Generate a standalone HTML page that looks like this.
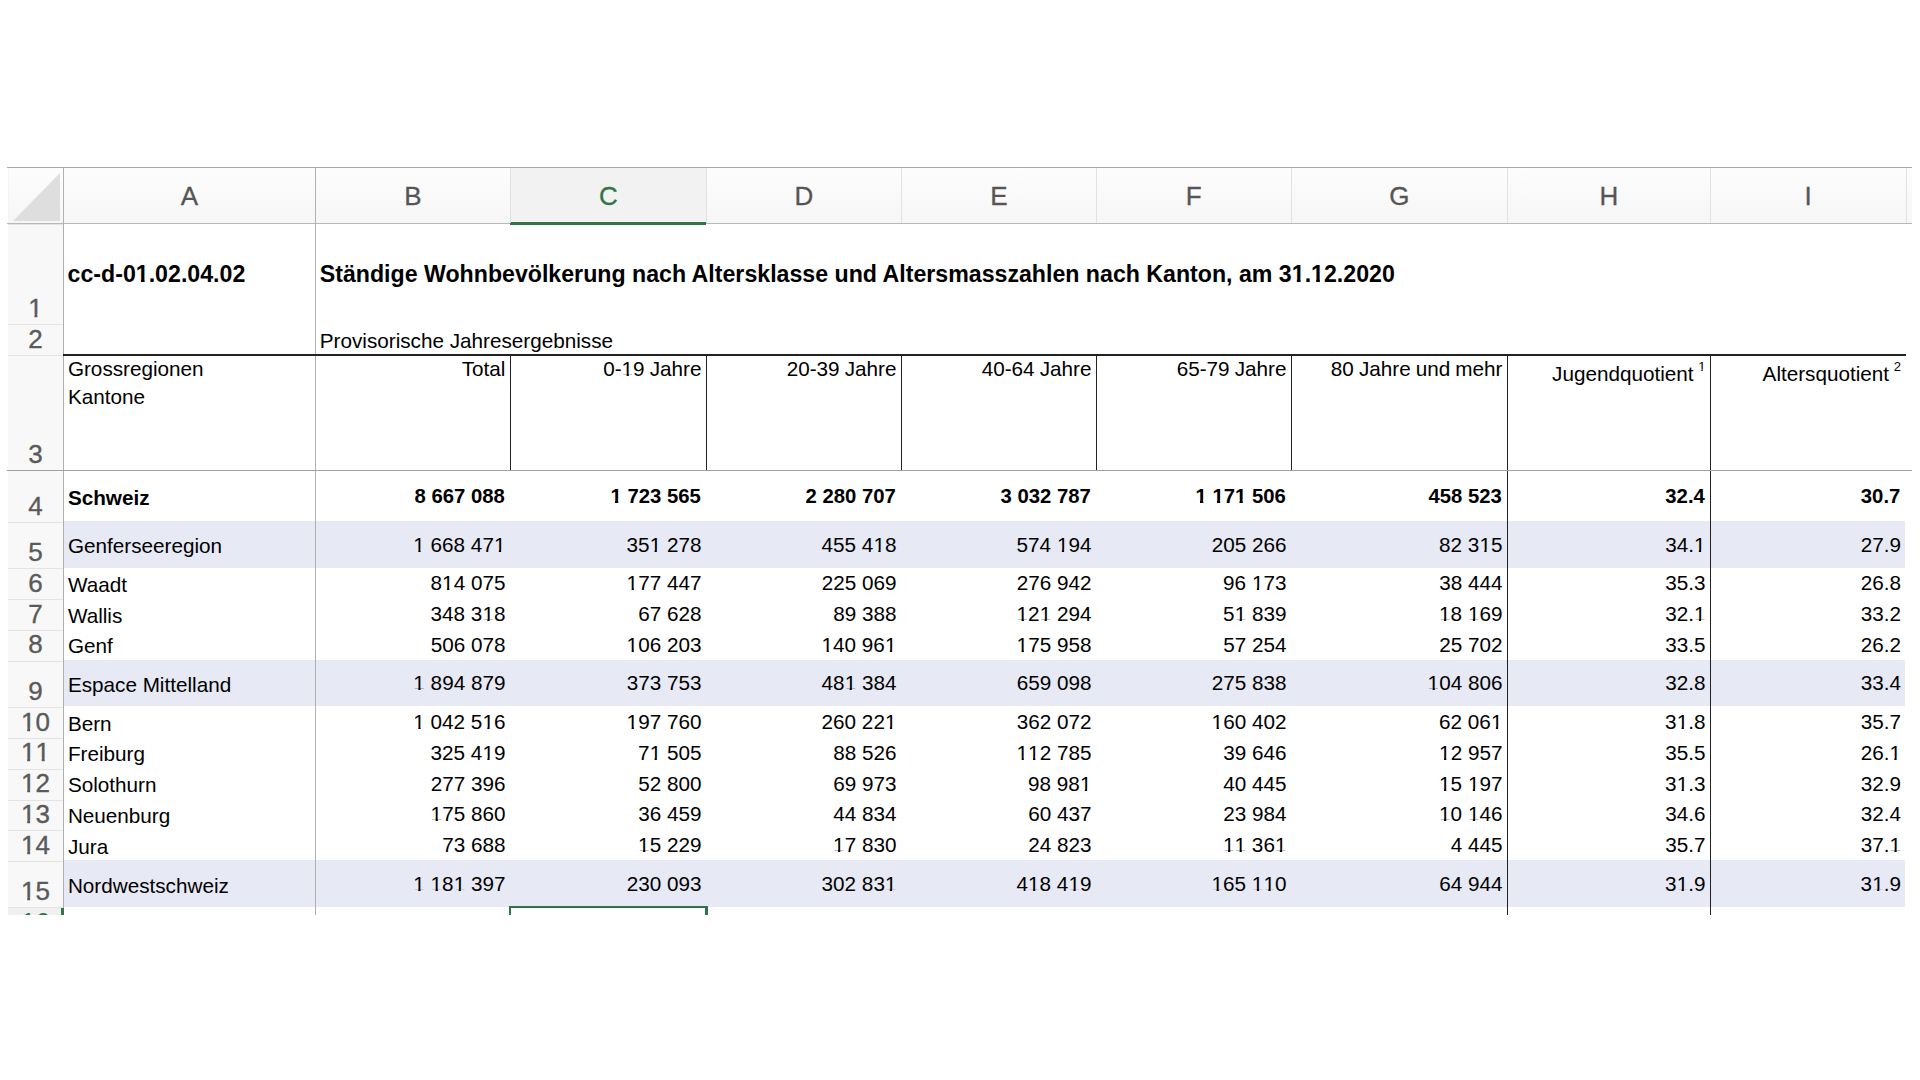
<!DOCTYPE html>
<html><head><meta charset="utf-8"><style>
html,body{margin:0;padding:0;background:#fff;width:1920px;height:1080px;overflow:hidden;position:relative}
.t{position:absolute;font-family:"Liberation Sans",sans-serif;line-height:1;white-space:nowrap}
.c{text-align:center}
.r{position:absolute}
.o{display:inline-block;clip-path:polygon(0 0,100% 0,100% 0.73em,0.35em 0.73em,0.35em 100%,0.24em 100%,0.24em 0.73em,0 0.73em)}
[style*="font-weight:700"] .o{clip-path:polygon(0 0,100% 0,100% 0.7em,0.38em 0.7em,0.38em 100%,0.22em 100%,0.22em 0.7em,0 0.7em)}
.sup{font-size:13px;position:relative;top:-10px;padding-left:4.6px}
</style></head><body>
<div class="r" style="left:8px;top:167px;width:1904px;height:57px;background:linear-gradient(#fdfdfd,#f6f6f6);"></div>
<div class="r" style="left:510px;top:168px;width:196px;height:55px;background:#f2f2f2;"></div>
<div class="r" style="left:8px;top:224px;width:55px;height:683.3px;background:#f8f8f8;"></div>
<div class="r" style="left:8px;top:907.3px;width:55px;height:7.7000000000000455px;background:#f0f0f0;"></div>
<svg class="r" style="left:13px;top:173px" width="48" height="49"><polygon points="47,0 47,48 0,48" fill="#dedede"/></svg>
<div class="r" style="left:63px;top:521px;width:1842px;height:46.59999999999991px;background:#e7e9f4;"></div>
<div class="r" style="left:63px;top:659.6px;width:1842px;height:46.89999999999998px;background:#e7e9f4;"></div>
<div class="r" style="left:63px;top:860.2px;width:1842px;height:46.399999999999864px;background:#e7e9f4;"></div>
<div class="r" style="left:7px;top:167px;width:1905px;height:1px;background:#a8a8a8;"></div>
<div class="r" style="left:7px;top:223px;width:1905px;height:1px;background:#b8b8b8;"></div>
<div class="r" style="left:510px;top:222px;width:196px;height:3px;background:#2f7545;"></div>
<div class="r" style="left:510px;top:168px;width:1px;height:55px;background:#e2e2e2;"></div>
<div class="r" style="left:706px;top:168px;width:1px;height:55px;background:#e2e2e2;"></div>
<div class="r" style="left:901px;top:168px;width:1px;height:55px;background:#e2e2e2;"></div>
<div class="r" style="left:1096px;top:168px;width:1px;height:55px;background:#e2e2e2;"></div>
<div class="r" style="left:1291px;top:168px;width:1px;height:55px;background:#e2e2e2;"></div>
<div class="r" style="left:1507px;top:168px;width:1px;height:55px;background:#e2e2e2;"></div>
<div class="r" style="left:1710px;top:168px;width:1px;height:55px;background:#e2e2e2;"></div>
<div class="r" style="left:1905.5px;top:168px;width:1.0px;height:55px;background:#e2e2e2;"></div>
<div class="r" style="left:8px;top:168px;width:1px;height:55px;background:#f4f4f4;"></div>
<div class="r" style="left:8px;top:224px;width:55px;height:1px;background:#e6e4e1;"></div>
<div class="r" style="left:8px;top:324.3px;width:55px;height:1.0px;background:#e6e4e1;"></div>
<div class="r" style="left:8px;top:355px;width:55px;height:1px;background:#e6e4e1;"></div>
<div class="r" style="left:8px;top:470.4px;width:55px;height:1.0px;background:#e6e4e1;"></div>
<div class="r" style="left:8px;top:522px;width:55px;height:1px;background:#e6e4e1;"></div>
<div class="r" style="left:8px;top:568.3px;width:55px;height:1.0px;background:#e6e4e1;"></div>
<div class="r" style="left:8px;top:599.1px;width:55px;height:1.0px;background:#e6e4e1;"></div>
<div class="r" style="left:8px;top:629.8px;width:55px;height:1.0px;background:#e6e4e1;"></div>
<div class="r" style="left:8px;top:660.6px;width:55px;height:1.0px;background:#e6e4e1;"></div>
<div class="r" style="left:8px;top:707.2px;width:55px;height:1.0px;background:#e6e4e1;"></div>
<div class="r" style="left:8px;top:737.8px;width:55px;height:1.0px;background:#e6e4e1;"></div>
<div class="r" style="left:8px;top:768.5px;width:55px;height:1.0px;background:#e6e4e1;"></div>
<div class="r" style="left:8px;top:799.5px;width:55px;height:1.0px;background:#e6e4e1;"></div>
<div class="r" style="left:8px;top:830.3px;width:55px;height:1.0px;background:#e6e4e1;"></div>
<div class="r" style="left:8px;top:861.2px;width:55px;height:1.0px;background:#e6e4e1;"></div>
<div class="r" style="left:8px;top:907.3px;width:55px;height:1.0px;background:#e6e4e1;"></div>
<div class="r" style="left:62.5px;top:167px;width:1.5px;height:748px;background:#b0b0b0;"></div>
<div class="r" style="left:314.5px;top:167px;width:1.5px;height:748px;background:#b0b0b0;"></div>
<div class="r" style="left:63px;top:354.2px;width:1843px;height:1.5px;background:#222;"></div>
<div class="r" style="left:509.5px;top:355px;width:1.5px;height:115.39999999999998px;background:#222;"></div>
<div class="r" style="left:705.5px;top:355px;width:1.5px;height:115.39999999999998px;background:#222;"></div>
<div class="r" style="left:900.5px;top:355px;width:1.5px;height:115.39999999999998px;background:#222;"></div>
<div class="r" style="left:1095.5px;top:355px;width:1.5px;height:115.39999999999998px;background:#222;"></div>
<div class="r" style="left:1290.5px;top:355px;width:1.5px;height:115.39999999999998px;background:#222;"></div>
<div class="r" style="left:1506.5px;top:355px;width:1.5px;height:115.39999999999998px;background:#222;"></div>
<div class="r" style="left:1709.5px;top:355px;width:1.5px;height:115.39999999999998px;background:#222;"></div>
<div class="r" style="left:1506.5px;top:470px;width:1.5px;height:445px;background:#222;"></div>
<div class="r" style="left:1709.5px;top:470px;width:1.5px;height:445px;background:#222;"></div>
<div class="r" style="left:7px;top:469.8px;width:1905px;height:1.1999999999999886px;background:#a0a0a0;"></div>
<div class="r" style="left:508.5px;top:905.5px;width:199.0px;height:2.5px;background:#2f7545;"></div>
<div class="r" style="left:508.5px;top:905.5px;width:2.5px;height:9.5px;background:#2f7545;"></div>
<div class="r" style="left:705px;top:905.5px;width:2.5px;height:9.5px;background:#2f7545;"></div>
<div class="r" style="left:61px;top:907.5px;width:3px;height:7.5px;background:#2f7545;"></div>
<div class="t c" style="left:-10.699999999999989px;width:400px;top:182.79px;font-size:26px;font-weight:400;color:#555;-webkit-text-stroke:0.3px #555">A</div>
<div class="t c" style="left:212.8px;width:400px;top:182.79px;font-size:26px;font-weight:400;color:#555;-webkit-text-stroke:0.3px #555">B</div>
<div class="t c" style="left:408.29999999999995px;width:400px;top:182.79px;font-size:26px;font-weight:400;color:#2f7545;-webkit-text-stroke:0.3px #2f7545">C</div>
<div class="t c" style="left:603.8px;width:400px;top:182.79px;font-size:26px;font-weight:400;color:#555;-webkit-text-stroke:0.3px #555">D</div>
<div class="t c" style="left:798.8px;width:400px;top:182.79px;font-size:26px;font-weight:400;color:#555;-webkit-text-stroke:0.3px #555">E</div>
<div class="t c" style="left:993.8px;width:400px;top:182.79px;font-size:26px;font-weight:400;color:#555;-webkit-text-stroke:0.3px #555">F</div>
<div class="t c" style="left:1199.3px;width:400px;top:182.79px;font-size:26px;font-weight:400;color:#555;-webkit-text-stroke:0.3px #555">G</div>
<div class="t c" style="left:1408.8px;width:400px;top:182.79px;font-size:26px;font-weight:400;color:#555;-webkit-text-stroke:0.3px #555">H</div>
<div class="t c" style="left:1608.05px;width:400px;top:182.79px;font-size:26px;font-weight:400;color:#555;-webkit-text-stroke:0.3px #555">I</div>
<div class="t c" style="left:-164.5px;width:400px;top:295.09px;font-size:26px;font-weight:400;color:#5a5a5a;-webkit-text-stroke:0.35px #5a5a5a"><span class="o">1</span></div>
<div class="t c" style="left:-164.5px;width:400px;top:325.79px;font-size:26px;font-weight:400;color:#5a5a5a;-webkit-text-stroke:0.35px #5a5a5a">2</div>
<div class="t c" style="left:-164.5px;width:400px;top:441.19px;font-size:26px;font-weight:400;color:#5a5a5a;-webkit-text-stroke:0.35px #5a5a5a">3</div>
<div class="t c" style="left:-164.5px;width:400px;top:492.79px;font-size:26px;font-weight:400;color:#5a5a5a;-webkit-text-stroke:0.35px #5a5a5a">4</div>
<div class="t c" style="left:-164.5px;width:400px;top:539.09px;font-size:26px;font-weight:400;color:#5a5a5a;-webkit-text-stroke:0.35px #5a5a5a">5</div>
<div class="t c" style="left:-164.5px;width:400px;top:569.89px;font-size:26px;font-weight:400;color:#5a5a5a;-webkit-text-stroke:0.35px #5a5a5a">6</div>
<div class="t c" style="left:-164.5px;width:400px;top:600.59px;font-size:26px;font-weight:400;color:#5a5a5a;-webkit-text-stroke:0.35px #5a5a5a">7</div>
<div class="t c" style="left:-164.5px;width:400px;top:631.39px;font-size:26px;font-weight:400;color:#5a5a5a;-webkit-text-stroke:0.35px #5a5a5a">8</div>
<div class="t c" style="left:-164.5px;width:400px;top:677.99px;font-size:26px;font-weight:400;color:#5a5a5a;-webkit-text-stroke:0.35px #5a5a5a">9</div>
<div class="t c" style="left:-164.5px;width:400px;top:708.59px;font-size:26px;font-weight:400;color:#5a5a5a;-webkit-text-stroke:0.35px #5a5a5a"><span class="o">1</span>0</div>
<div class="t c" style="left:-164.5px;width:400px;top:739.29px;font-size:26px;font-weight:400;color:#5a5a5a;-webkit-text-stroke:0.35px #5a5a5a"><span class="o">1</span><span class="o">1</span></div>
<div class="t c" style="left:-164.5px;width:400px;top:770.29px;font-size:26px;font-weight:400;color:#5a5a5a;-webkit-text-stroke:0.35px #5a5a5a"><span class="o">1</span>2</div>
<div class="t c" style="left:-164.5px;width:400px;top:801.09px;font-size:26px;font-weight:400;color:#5a5a5a;-webkit-text-stroke:0.35px #5a5a5a"><span class="o">1</span>3</div>
<div class="t c" style="left:-164.5px;width:400px;top:831.99px;font-size:26px;font-weight:400;color:#5a5a5a;-webkit-text-stroke:0.35px #5a5a5a"><span class="o">1</span>4</div>
<div class="t c" style="left:-164.5px;width:400px;top:878.09px;font-size:26px;font-weight:400;color:#5a5a5a;-webkit-text-stroke:0.35px #5a5a5a"><span class="o">1</span>5</div>
<div class="r" style="left:8px;top:907.5px;width:53px;height:7.5px;overflow:hidden"><div class="t c" style="left:-172.5px;width:400px;top:1.39px;font-size:26px;color:#2f7545">16</div></div>
<div class="r" style="left:0px;top:915px;width:1920px;height:165px;background:#fff;"></div>
<div class="t" style="left:67.6px;top:262.69px;font-size:23.17px;font-weight:700;color:#000;">cc-d-0<span class="o">1</span>.02.04.02</div>
<div class="t" style="left:319.8px;top:262.69px;font-size:23.17px;font-weight:700;color:#000;">Ständige Wohnbevölkerung nach Altersklasse und Altersmasszahlen nach Kanton, am 3<span class="o">1</span>.<span class="o">1</span>2.2020</div>
<div class="t" style="left:319.8px;top:330.98px;font-size:20.7px;font-weight:400;color:#000;">Provisorische Jahresergebnisse</div>
<div class="t" style="left:67.89999999999999px;top:358.88px;font-size:20.7px;font-weight:400;color:#000;">Grossregionen</div>
<div class="t" style="left:67.89999999999999px;top:387.48px;font-size:20.7px;font-weight:400;color:#000;">Kantone</div>
<div class="t" style="right:1414.6px;top:359.28px;font-size:20.7px;font-weight:400;color:#000;word-spacing:-0.7px">Total</div>
<div class="t" style="right:1218.6px;top:359.28px;font-size:20.7px;font-weight:400;color:#000;word-spacing:-0.7px">0-<span class="o">1</span>9 Jahre</div>
<div class="t" style="right:1023.6px;top:359.28px;font-size:20.7px;font-weight:400;color:#000;word-spacing:-0.7px">20-39 Jahre</div>
<div class="t" style="right:828.5999999999999px;top:359.28px;font-size:20.7px;font-weight:400;color:#000;word-spacing:-0.7px">40-64 Jahre</div>
<div class="t" style="right:633.5999999999999px;top:359.28px;font-size:20.7px;font-weight:400;color:#000;word-spacing:-0.7px">65-79 Jahre</div>
<div class="t" style="right:417.5999999999999px;top:359.28px;font-size:20.7px;font-weight:400;color:#000;word-spacing:-0.7px">80 Jahre und mehr</div>
<div class="t" style="right:214.5999999999999px;top:363.88px;font-size:20.7px;font-weight:400;color:#000;">Jugendquotient<span class="sup"><span class="o">1</span></span></div>
<div class="t" style="right:19.09999999999991px;top:363.88px;font-size:20.7px;font-weight:400;color:#000;">Altersquotient<span class="sup">2</span></div>
<div class="t" style="left:67.89999999999999px;top:487.98px;font-size:20.7px;font-weight:700;color:#000;">Schweiz</div>
<div class="t" style="right:1415.2px;top:485.52px;font-size:20.3px;font-weight:700;color:#000;">8 667 088</div>
<div class="t" style="right:1219.2px;top:485.52px;font-size:20.3px;font-weight:700;color:#000;"><span class="o">1</span> 723 565</div>
<div class="t" style="right:1024.2px;top:485.52px;font-size:20.3px;font-weight:700;color:#000;">2 280 707</div>
<div class="t" style="right:829.1999999999998px;top:485.52px;font-size:20.3px;font-weight:700;color:#000;">3 032 787</div>
<div class="t" style="right:634.1999999999998px;top:485.52px;font-size:20.3px;font-weight:700;color:#000;"><span class="o">1</span> <span class="o">1</span>7<span class="o">1</span> 506</div>
<div class="t" style="right:418.1999999999998px;top:485.52px;font-size:20.3px;font-weight:700;color:#000;">458 523</div>
<div class="t" style="right:215.19999999999982px;top:485.52px;font-size:20.3px;font-weight:700;color:#000;">32.4</div>
<div class="t" style="right:19.699999999999818px;top:485.52px;font-size:20.3px;font-weight:700;color:#000;">30.7</div>
<div class="t" style="left:67.89999999999999px;top:536.48px;font-size:20.7px;font-weight:400;color:#000;">Genferseeregion</div>
<div class="t" style="right:1414.6px;top:534.58px;font-size:20.7px;font-weight:400;color:#000;"><span class="o">1</span> 668 47<span class="o">1</span></div>
<div class="t" style="right:1218.6px;top:534.58px;font-size:20.7px;font-weight:400;color:#000;">35<span class="o">1</span> 278</div>
<div class="t" style="right:1023.6px;top:534.58px;font-size:20.7px;font-weight:400;color:#000;">455 4<span class="o">1</span>8</div>
<div class="t" style="right:828.5999999999999px;top:534.58px;font-size:20.7px;font-weight:400;color:#000;">574 <span class="o">1</span>94</div>
<div class="t" style="right:633.5999999999999px;top:534.58px;font-size:20.7px;font-weight:400;color:#000;">205 266</div>
<div class="t" style="right:417.5999999999999px;top:534.58px;font-size:20.7px;font-weight:400;color:#000;">82 3<span class="o">1</span>5</div>
<div class="t" style="right:214.5999999999999px;top:534.58px;font-size:20.7px;font-weight:400;color:#000;">34.<span class="o">1</span></div>
<div class="t" style="right:19.09999999999991px;top:534.58px;font-size:20.7px;font-weight:400;color:#000;">27.9</div>
<div class="t" style="left:67.89999999999999px;top:574.88px;font-size:20.7px;font-weight:400;color:#000;">Waadt</div>
<div class="t" style="right:1414.6px;top:572.98px;font-size:20.7px;font-weight:400;color:#000;">8<span class="o">1</span>4 075</div>
<div class="t" style="right:1218.6px;top:572.98px;font-size:20.7px;font-weight:400;color:#000;"><span class="o">1</span>77 447</div>
<div class="t" style="right:1023.6px;top:572.98px;font-size:20.7px;font-weight:400;color:#000;">225 069</div>
<div class="t" style="right:828.5999999999999px;top:572.98px;font-size:20.7px;font-weight:400;color:#000;">276 942</div>
<div class="t" style="right:633.5999999999999px;top:572.98px;font-size:20.7px;font-weight:400;color:#000;">96 <span class="o">1</span>73</div>
<div class="t" style="right:417.5999999999999px;top:572.98px;font-size:20.7px;font-weight:400;color:#000;">38 444</div>
<div class="t" style="right:214.5999999999999px;top:572.98px;font-size:20.7px;font-weight:400;color:#000;">35.3</div>
<div class="t" style="right:19.09999999999991px;top:572.98px;font-size:20.7px;font-weight:400;color:#000;">26.8</div>
<div class="t" style="left:67.89999999999999px;top:606.18px;font-size:20.7px;font-weight:400;color:#000;">Wallis</div>
<div class="t" style="right:1414.6px;top:604.28px;font-size:20.7px;font-weight:400;color:#000;">348 3<span class="o">1</span>8</div>
<div class="t" style="right:1218.6px;top:604.28px;font-size:20.7px;font-weight:400;color:#000;">67 628</div>
<div class="t" style="right:1023.6px;top:604.28px;font-size:20.7px;font-weight:400;color:#000;">89 388</div>
<div class="t" style="right:828.5999999999999px;top:604.28px;font-size:20.7px;font-weight:400;color:#000;"><span class="o">1</span>2<span class="o">1</span> 294</div>
<div class="t" style="right:633.5999999999999px;top:604.28px;font-size:20.7px;font-weight:400;color:#000;">5<span class="o">1</span> 839</div>
<div class="t" style="right:417.5999999999999px;top:604.28px;font-size:20.7px;font-weight:400;color:#000;"><span class="o">1</span>8 <span class="o">1</span>69</div>
<div class="t" style="right:214.5999999999999px;top:604.28px;font-size:20.7px;font-weight:400;color:#000;">32.<span class="o">1</span></div>
<div class="t" style="right:19.09999999999991px;top:604.28px;font-size:20.7px;font-weight:400;color:#000;">33.2</div>
<div class="t" style="left:67.89999999999999px;top:636.48px;font-size:20.7px;font-weight:400;color:#000;">Genf</div>
<div class="t" style="right:1414.6px;top:634.58px;font-size:20.7px;font-weight:400;color:#000;">506 078</div>
<div class="t" style="right:1218.6px;top:634.58px;font-size:20.7px;font-weight:400;color:#000;"><span class="o">1</span>06 203</div>
<div class="t" style="right:1023.6px;top:634.58px;font-size:20.7px;font-weight:400;color:#000;"><span class="o">1</span>40 96<span class="o">1</span></div>
<div class="t" style="right:828.5999999999999px;top:634.58px;font-size:20.7px;font-weight:400;color:#000;"><span class="o">1</span>75 958</div>
<div class="t" style="right:633.5999999999999px;top:634.58px;font-size:20.7px;font-weight:400;color:#000;">57 254</div>
<div class="t" style="right:417.5999999999999px;top:634.58px;font-size:20.7px;font-weight:400;color:#000;">25 702</div>
<div class="t" style="right:214.5999999999999px;top:634.58px;font-size:20.7px;font-weight:400;color:#000;">33.5</div>
<div class="t" style="right:19.09999999999991px;top:634.58px;font-size:20.7px;font-weight:400;color:#000;">26.2</div>
<div class="t" style="left:67.89999999999999px;top:675.18px;font-size:20.7px;font-weight:400;color:#000;">Espace Mittelland</div>
<div class="t" style="right:1414.6px;top:673.28px;font-size:20.7px;font-weight:400;color:#000;"><span class="o">1</span> 894 879</div>
<div class="t" style="right:1218.6px;top:673.28px;font-size:20.7px;font-weight:400;color:#000;">373 753</div>
<div class="t" style="right:1023.6px;top:673.28px;font-size:20.7px;font-weight:400;color:#000;">48<span class="o">1</span> 384</div>
<div class="t" style="right:828.5999999999999px;top:673.28px;font-size:20.7px;font-weight:400;color:#000;">659 098</div>
<div class="t" style="right:633.5999999999999px;top:673.28px;font-size:20.7px;font-weight:400;color:#000;">275 838</div>
<div class="t" style="right:417.5999999999999px;top:673.28px;font-size:20.7px;font-weight:400;color:#000;"><span class="o">1</span>04 806</div>
<div class="t" style="right:214.5999999999999px;top:673.28px;font-size:20.7px;font-weight:400;color:#000;">32.8</div>
<div class="t" style="right:19.09999999999991px;top:673.28px;font-size:20.7px;font-weight:400;color:#000;">33.4</div>
<div class="t" style="left:67.89999999999999px;top:713.78px;font-size:20.7px;font-weight:400;color:#000;">Bern</div>
<div class="t" style="right:1414.6px;top:711.88px;font-size:20.7px;font-weight:400;color:#000;"><span class="o">1</span> 042 5<span class="o">1</span>6</div>
<div class="t" style="right:1218.6px;top:711.88px;font-size:20.7px;font-weight:400;color:#000;"><span class="o">1</span>97 760</div>
<div class="t" style="right:1023.6px;top:711.88px;font-size:20.7px;font-weight:400;color:#000;">260 22<span class="o">1</span></div>
<div class="t" style="right:828.5999999999999px;top:711.88px;font-size:20.7px;font-weight:400;color:#000;">362 072</div>
<div class="t" style="right:633.5999999999999px;top:711.88px;font-size:20.7px;font-weight:400;color:#000;"><span class="o">1</span>60 402</div>
<div class="t" style="right:417.5999999999999px;top:711.88px;font-size:20.7px;font-weight:400;color:#000;">62 06<span class="o">1</span></div>
<div class="t" style="right:214.5999999999999px;top:711.88px;font-size:20.7px;font-weight:400;color:#000;">3<span class="o">1</span>.8</div>
<div class="t" style="right:19.09999999999991px;top:711.88px;font-size:20.7px;font-weight:400;color:#000;">35.7</div>
<div class="t" style="left:67.89999999999999px;top:744.48px;font-size:20.7px;font-weight:400;color:#000;">Freiburg</div>
<div class="t" style="right:1414.6px;top:742.58px;font-size:20.7px;font-weight:400;color:#000;">325 4<span class="o">1</span>9</div>
<div class="t" style="right:1218.6px;top:742.58px;font-size:20.7px;font-weight:400;color:#000;">7<span class="o">1</span> 505</div>
<div class="t" style="right:1023.6px;top:742.58px;font-size:20.7px;font-weight:400;color:#000;">88 526</div>
<div class="t" style="right:828.5999999999999px;top:742.58px;font-size:20.7px;font-weight:400;color:#000;"><span class="o">1</span><span class="o">1</span>2 785</div>
<div class="t" style="right:633.5999999999999px;top:742.58px;font-size:20.7px;font-weight:400;color:#000;">39 646</div>
<div class="t" style="right:417.5999999999999px;top:742.58px;font-size:20.7px;font-weight:400;color:#000;"><span class="o">1</span>2 957</div>
<div class="t" style="right:214.5999999999999px;top:742.58px;font-size:20.7px;font-weight:400;color:#000;">35.5</div>
<div class="t" style="right:19.09999999999991px;top:742.58px;font-size:20.7px;font-weight:400;color:#000;">26.<span class="o">1</span></div>
<div class="t" style="left:67.89999999999999px;top:775.48px;font-size:20.7px;font-weight:400;color:#000;">Solothurn</div>
<div class="t" style="right:1414.6px;top:773.58px;font-size:20.7px;font-weight:400;color:#000;">277 396</div>
<div class="t" style="right:1218.6px;top:773.58px;font-size:20.7px;font-weight:400;color:#000;">52 800</div>
<div class="t" style="right:1023.6px;top:773.58px;font-size:20.7px;font-weight:400;color:#000;">69 973</div>
<div class="t" style="right:828.5999999999999px;top:773.58px;font-size:20.7px;font-weight:400;color:#000;">98 98<span class="o">1</span></div>
<div class="t" style="right:633.5999999999999px;top:773.58px;font-size:20.7px;font-weight:400;color:#000;">40 445</div>
<div class="t" style="right:417.5999999999999px;top:773.58px;font-size:20.7px;font-weight:400;color:#000;"><span class="o">1</span>5 <span class="o">1</span>97</div>
<div class="t" style="right:214.5999999999999px;top:773.58px;font-size:20.7px;font-weight:400;color:#000;">3<span class="o">1</span>.3</div>
<div class="t" style="right:19.09999999999991px;top:773.58px;font-size:20.7px;font-weight:400;color:#000;">32.9</div>
<div class="t" style="left:67.89999999999999px;top:806.28px;font-size:20.7px;font-weight:400;color:#000;">Neuenburg</div>
<div class="t" style="right:1414.6px;top:804.38px;font-size:20.7px;font-weight:400;color:#000;"><span class="o">1</span>75 860</div>
<div class="t" style="right:1218.6px;top:804.38px;font-size:20.7px;font-weight:400;color:#000;">36 459</div>
<div class="t" style="right:1023.6px;top:804.38px;font-size:20.7px;font-weight:400;color:#000;">44 834</div>
<div class="t" style="right:828.5999999999999px;top:804.38px;font-size:20.7px;font-weight:400;color:#000;">60 437</div>
<div class="t" style="right:633.5999999999999px;top:804.38px;font-size:20.7px;font-weight:400;color:#000;">23 984</div>
<div class="t" style="right:417.5999999999999px;top:804.38px;font-size:20.7px;font-weight:400;color:#000;"><span class="o">1</span>0 <span class="o">1</span>46</div>
<div class="t" style="right:214.5999999999999px;top:804.38px;font-size:20.7px;font-weight:400;color:#000;">34.6</div>
<div class="t" style="right:19.09999999999991px;top:804.38px;font-size:20.7px;font-weight:400;color:#000;">32.4</div>
<div class="t" style="left:67.89999999999999px;top:837.18px;font-size:20.7px;font-weight:400;color:#000;">Jura</div>
<div class="t" style="right:1414.6px;top:835.28px;font-size:20.7px;font-weight:400;color:#000;">73 688</div>
<div class="t" style="right:1218.6px;top:835.28px;font-size:20.7px;font-weight:400;color:#000;"><span class="o">1</span>5 229</div>
<div class="t" style="right:1023.6px;top:835.28px;font-size:20.7px;font-weight:400;color:#000;"><span class="o">1</span>7 830</div>
<div class="t" style="right:828.5999999999999px;top:835.28px;font-size:20.7px;font-weight:400;color:#000;">24 823</div>
<div class="t" style="right:633.5999999999999px;top:835.28px;font-size:20.7px;font-weight:400;color:#000;"><span class="o">1</span><span class="o">1</span> 36<span class="o">1</span></div>
<div class="t" style="right:417.5999999999999px;top:835.28px;font-size:20.7px;font-weight:400;color:#000;">4 445</div>
<div class="t" style="right:214.5999999999999px;top:835.28px;font-size:20.7px;font-weight:400;color:#000;">35.7</div>
<div class="t" style="right:19.09999999999991px;top:835.28px;font-size:20.7px;font-weight:400;color:#000;">37.<span class="o">1</span></div>
<div class="t" style="left:67.89999999999999px;top:875.98px;font-size:20.7px;font-weight:400;color:#000;">Nordwestschweiz</div>
<div class="t" style="right:1414.6px;top:874.08px;font-size:20.7px;font-weight:400;color:#000;"><span class="o">1</span> <span class="o">1</span>8<span class="o">1</span> 397</div>
<div class="t" style="right:1218.6px;top:874.08px;font-size:20.7px;font-weight:400;color:#000;">230 093</div>
<div class="t" style="right:1023.6px;top:874.08px;font-size:20.7px;font-weight:400;color:#000;">302 83<span class="o">1</span></div>
<div class="t" style="right:828.5999999999999px;top:874.08px;font-size:20.7px;font-weight:400;color:#000;">4<span class="o">1</span>8 4<span class="o">1</span>9</div>
<div class="t" style="right:633.5999999999999px;top:874.08px;font-size:20.7px;font-weight:400;color:#000;"><span class="o">1</span>65 <span class="o">1</span><span class="o">1</span>0</div>
<div class="t" style="right:417.5999999999999px;top:874.08px;font-size:20.7px;font-weight:400;color:#000;">64 944</div>
<div class="t" style="right:214.5999999999999px;top:874.08px;font-size:20.7px;font-weight:400;color:#000;">3<span class="o">1</span>.9</div>
<div class="t" style="right:19.09999999999991px;top:874.08px;font-size:20.7px;font-weight:400;color:#000;">3<span class="o">1</span>.9</div>
</body></html>
